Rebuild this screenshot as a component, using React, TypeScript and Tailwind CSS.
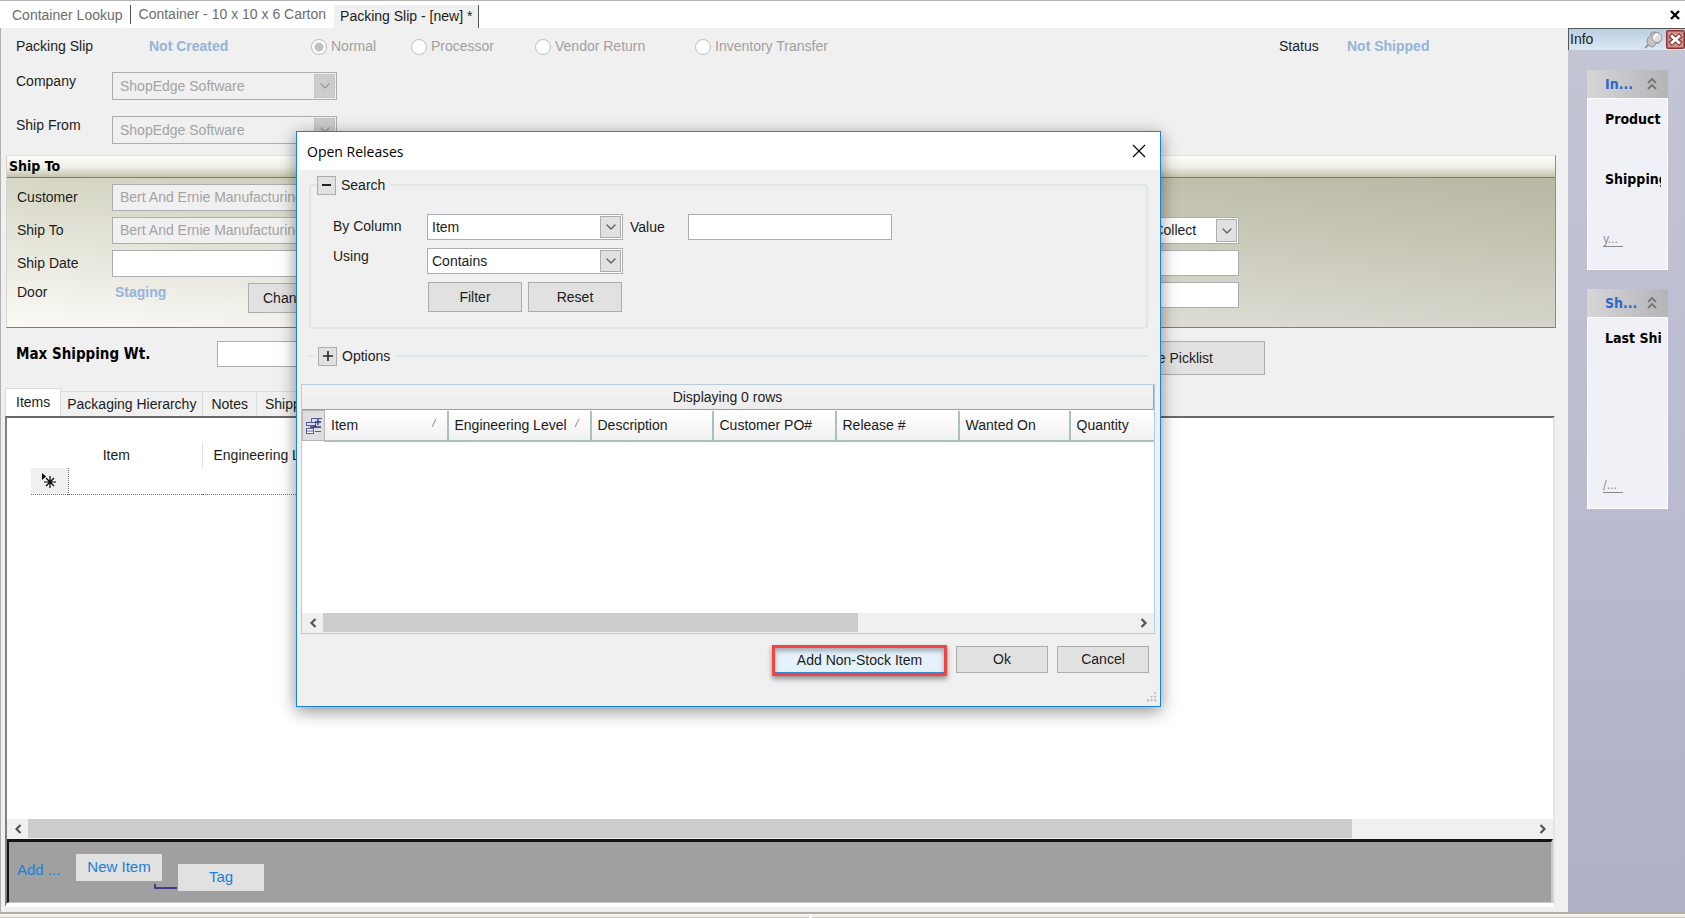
import React from 'react';
import { ChevronDown } from 'lucide-react';
import clsx from 'clsx';

const slipTypes = [
  { label: 'Normal', width: 'w-[100px]' },
  { label: 'Processor', width: 'w-[124px]' },
  { label: 'Vendor Return', width: 'w-[160px]' },
  { label: 'Inventory Transfer', width: 'w-[160px]' },
];

const releaseColumns = [
  { label: 'Item', width: 'w-[123px]', sorted: true },
  { label: 'Engineering Level', width: 'w-[143px]', sorted: true },
  { label: 'Description', width: 'w-[122px]' },
  { label: 'Customer PO#', width: 'w-[123px]' },
  { label: 'Release #', width: 'w-[123px]' },
  { label: 'Wanted On', width: 'w-[111px]' },
  { label: 'Quantity', width: '' },
];

interface SelectBoxProps {
  id: string;
  value: string;
  className?: string;
  disabled?: boolean;
}

const SelectBox: React.FC<SelectBoxProps> = ({ id, value, className, disabled }) => (
  <div className={clsx('relative', className)}>
    <select
      id={id}
      defaultValue={value}
      disabled={disabled}
      className={clsx(
        'block h-full w-full appearance-none border border-[#abadb3] pr-7 outline-none',
        disabled ? 'bg-[#f0f0f0] pl-[7px] text-[#a3a3a3] opacity-100' : 'bg-white pl-1 text-[#1c1c1c]'
      )}
    >
      <option>{value}</option>
    </select>
    <span
      className={clsx(
        'pointer-events-none absolute top-[2px] right-[2px] bottom-[2px] flex w-[21px] items-center justify-center border',
        disabled ? 'border-[#c6c6c6] bg-[#cccccc] text-[#9c9c9c]' : 'border-[#adadad] bg-[#e1e1e1] text-[#606060]'
      )}
    >
      <ChevronDown className="h-4 w-4" strokeWidth={2} />
    </span>
  </div>
);

const ScrollBar: React.FC<{ thumb: string }> = ({ thumb }) => (
  <div className="flex h-5 shrink-0 bg-[#f0f0f0]">
    <button aria-label="Scroll left" className="flex w-[21px] items-center justify-center">
      <svg viewBox="0 0 10 10" className="h-[10px] w-[10px]">
        <path d="M7.5 1 L3.5 5 L7.5 9" fill="none" stroke="#555" strokeWidth="2.2" />
      </svg>
    </button>
    <div className="flex-1">
      <div className={clsx('h-[19px] bg-[#cdcdcd]', thumb)} />
    </div>
    <button aria-label="Scroll right" className="flex w-[21px] items-center justify-center">
      <svg viewBox="0 0 10 10" className="h-[10px] w-[10px]">
        <path d="M2.5 1 L6.5 5 L2.5 9" fill="none" stroke="#555" strokeWidth="2.2" />
      </svg>
    </button>
  </div>
);

const TopTabs: React.FC = () => (
  <nav className="flex h-7 shrink-0 items-stretch border-t border-[#b4b4b4] bg-white pl-3 text-[14px] text-[#6d6d6d]">
    <button className="my-1 border-r border-[#555] pr-[7px]">Container Lookup</button>
    <button className="px-2">Container - 10 x 10 x 6 Carton</button>
    <button className="mt-1 border-r border-[#555] bg-[#f0f0f0] px-[6px] text-[#1c1c1c]">Packing Slip - [new] *</button>
    <button aria-label="Close tab" className="ml-auto flex w-5 items-center justify-center">
      <svg viewBox="0 0 12 10" className="h-[10px] w-3">
        <path d="M2 1 L10 9 M10 1 L2 9" stroke="#000" strokeWidth="2.4" />
      </svg>
    </button>
  </nav>
);

const SlipHeader: React.FC = () => (
  <section className="pl-[15px] text-[14px] text-[#1c1c1c]">
    <div className="flex h-[37px] items-center">
      <span className="w-[133px]">Packing Slip</span>
      <span className="w-[162px] font-bold text-[#94b4d9]">Not Created</span>
      {slipTypes.map((type, i) => (
        <label key={type.label} className={clsx('flex items-center gap-1 whitespace-nowrap text-[#a0a0a0]', type.width)}>
          <input
            type="radio"
            name="slip-type"
            disabled
            defaultChecked={i === 0}
            className="h-4 w-4 shrink-0 appearance-none rounded-full border border-[#c0c0c0] bg-white checked:border-[#b8b8b8] checked:bg-[radial-gradient(circle,#c0c0c0_4px,#fff_5px)]"
          />
          {type.label}
        </label>
      ))}
      <span className="ml-auto w-[68px]">Status</span>
      <span className="w-[221px] font-bold text-[#94b4d9]">Not Shipped</span>
    </div>
    <div className="mt-[7px] flex items-start">
      <label htmlFor="company" className="w-24 leading-[18px]">Company</label>
      <SelectBox id="company" value="ShopEdge Software" disabled className="h-7 w-[225px]" />
    </div>
    <div className="mt-4 flex items-start">
      <label htmlFor="ship-from" className="w-24 leading-[18px]">Ship From</label>
      <SelectBox id="ship-from" value="ShopEdge Software" disabled className="h-7 w-[225px]" />
    </div>
  </section>
);

const ShipTo: React.FC = () => (
  <section className="mt-[11px] mr-3 ml-[5px] border border-t-[#e0e0e0] border-r-[#8c8c8c] border-b-[#7d7d7d] border-l-[#d5d5d5] text-[14px] text-[#1c1c1c]">
    <h2 className="h-[22px] border-b border-[#7d7d78] bg-[linear-gradient(#fcfcfa_0%,#f1f1e8_50%,#c4c4ab_100%)] pl-[2px] font-['DejaVu_Sans_Condensed','DejaVu_Sans',sans-serif] leading-5 font-bold text-black">
      Ship To
    </h2>
    <div className="flex justify-between bg-[linear-gradient(to_right,rgba(40,40,0,0),rgba(40,40,0,0.18)),linear-gradient(to_bottom,#d6d6c5,#fbfaf6)] pt-[6px] pb-[14px] pl-[10px]">
      <div className="flex flex-col gap-[6px]">
        <div className="flex h-[27px] items-center">
          <label htmlFor="customer" className="w-[95px]">Customer</label>
          <SelectBox id="customer" value="Bert And Ernie Manufacturing" disabled className="h-full w-[300px]" />
        </div>
        <div className="flex h-[27px] items-center">
          <label htmlFor="ship-to" className="w-[95px]">Ship To</label>
          <SelectBox id="ship-to" value="Bert And Ernie Manufacturing" disabled className="h-full w-[300px]" />
        </div>
        <div className="flex h-[27px] items-center">
          <label htmlFor="ship-date" className="w-[95px]">Ship Date</label>
          <input id="ship-date" className="h-full w-[300px] border border-[#abadb3] bg-white px-1" />
        </div>
        <div className="flex h-[30px] items-start leading-[18px]">
          <span className="w-[98px]">Door</span>
          <span className="w-[133px] font-bold text-[#94b4d9]">Staging</span>
          <button className="h-[30px] border border-[#adadad] bg-[#e1e1e1] px-[14px]">Change Door</button>
        </div>
      </div>
      <div className="mt-[33px] mr-[316px] flex w-[138px] flex-col gap-[6px]">
        <SelectBox id="freight" value="Freight Collect" className="h-[27px]" />
        <input aria-label="Account" className="h-[26px] border border-[#abadb3] bg-white px-1" />
        <input aria-label="Tracking" className="h-[26px] border border-[#abadb3] bg-white px-1" />
      </div>
    </div>
  </section>
);

const ItemsPanel: React.FC = () => (
  <section className="mr-[13px] ml-1 flex flex-1 flex-col text-[14px] text-[#1c1c1c]">
    <div role="tablist" className="mt-[13px] flex items-end">
      <button role="tab" className="h-7 border border-b-0 border-[#dcdcdc] bg-white px-[10px]">Items</button>
      <button role="tab" className="h-[25px] border-t border-r border-[#dcdcdc] px-[6px]">Packaging Hierarchy</button>
      <button role="tab" className="h-[25px] border-t border-r border-[#dcdcdc] px-2">Notes</button>
      <button role="tab" className="h-[25px] border-t border-r border-[#dcdcdc] px-2">Shipping</button>
    </div>
    <div className="mb-[5px] flex flex-1 flex-col border-t-2 border-r-2 border-b-4 border-l-2 border-t-[#696969] border-r-[#e3e3e3] border-b-white border-l-[#808080] bg-white">
      <div className="flex-1 pt-6 pl-[24px]">
        <table className="border-collapse">
          <thead>
            <tr className="h-[26px]">
              <th colSpan={2} className="w-[171px] border-r border-[#e2e2e2] font-normal">Item</th>
              <th className="w-[150px] pl-[11px] text-left font-normal">Engineering Level</th>
              <th className="w-[600px]" />
            </tr>
          </thead>
          <tbody>
            <tr className="h-[26px] border-b border-dotted border-[#777]">
              <td className="w-[37px] border-r border-dotted border-[#777] bg-[#f0f0f0]">
                <svg viewBox="0 0 16 16" className="mx-auto h-4 w-4">
                  <path d="M1 0 L1 7 L5 3.5 Z" fill="#000" />
                  <path d="M9 3 V15 M3 9 H15 M5 5 L13 13 M13 5 L5 13" stroke="#000" strokeWidth="1.2" />
                </svg>
              </td>
              <td className="w-[134px]" />
              <td />
              <td />
            </tr>
          </tbody>
        </table>
      </div>
      <ScrollBar thumb="w-[88%]" />
      <div className="flex h-16 items-start border-t-[3px] border-r-2 border-b border-l-2 border-t-[#141414] border-r-[#c8c8c8] border-b-[#c8c8c8] border-l-[#141414] bg-[#a0a0a0] pt-3 pl-2 text-[15px] text-[#1a7fdc]">
        <span className="w-[59px] pt-1 leading-6">Add ...</span>
        <button className="h-[27px] w-[86px] bg-[#e1e1e1]">New Item</button>
        <svg viewBox="0 0 24 38" className="-ml-2 h-[38px] w-6">
          <path d="M1 30 V34 H23" fill="none" stroke="#1c1c8c" strokeWidth="1.5" />
        </svg>
        <button className="mt-[10px] h-[27px] w-[86px] bg-[#e1e1e1]">Tag</button>
      </div>
    </div>
  </section>
);

interface InfoCardProps {
  title: string;
  lines: string[];
  link: string;
  bodyHeight: string;
}

const InfoCard: React.FC<InfoCardProps> = ({ title, lines, link, bodyHeight }) => (
  <section className="w-[81px] font-['DejaVu_Sans_Condensed','DejaVu_Sans',sans-serif] text-[14px]">
    <h3 className="flex h-7 items-center justify-between bg-linear-to-r from-[#d6d6d8] to-[#b5b5b7] pr-[10px] pl-[18px] font-bold text-[#2f66cc]">
      {title}
      <svg viewBox="0 0 12 14" className="h-[14px] w-3">
        <path d="M2 6 L6 2 L10 6 M2 12 L6 8 L10 12" fill="none" stroke="#777" strokeWidth="2" />
      </svg>
    </h3>
    <div className={clsx('flex flex-col border border-white bg-[#f0f1f6] pt-[10px] pr-[6px] pl-[17px]', bodyHeight)}>
      <div className="flex flex-col gap-10 overflow-hidden font-bold whitespace-nowrap text-black">
        {lines.map((line) => (
          <span key={line} className="leading-5">{line}</span>
        ))}
      </div>
      <a href="#" className="mt-auto -ml-[2px] w-[20px] border-b border-[#888] text-[12px] leading-[14px] text-[#8a8a8a]">
        {link}
      </a>
    </div>
  </section>
);

const InfoPanel: React.FC = () => (
  <aside className="flex w-[117px] shrink-0 flex-col bg-linear-to-b from-[#c4c6d6] to-[#b0b1c9]">
    <div className="flex h-[22px] items-center border-t border-l border-[#555] bg-linear-to-b from-[#b9cee2] to-[#dce8f2] pl-px text-[14px] text-[#222]">
      <h2>Info</h2>
      <button aria-label="Pin" className="ml-auto">
        <svg viewBox="0 0 20 20" className="h-5 w-5">
          <path d="M6 13 L1 18" stroke="#999" strokeWidth="2" />
          <path d="M4 8 C6 7 7 5 7 3 C11 1 16 2 17 7 C18 12 14 14 12 13 C11 16 9 17 8 17 C4 16 2 12 4 8 Z" fill="#c6c6c8" stroke="#8f8f92" />
          <circle cx="13" cy="7.5" r="5" fill="#dededf" stroke="#959598" />
          <path d="M10 9 C10 6 12 4.5 14 4.5" fill="none" stroke="#fff" strokeWidth="2" />
        </svg>
      </button>
      <button aria-label="Close info" className="ml-[2px]">
        <svg viewBox="0 0 19 19" className="h-[19px] w-[19px]">
          <rect x="0.75" y="0.75" width="17.5" height="17.5" rx="1.5" fill="#cf8f8c" stroke="#8e3330" strokeWidth="1.5" />
          <path d="M4 5 L15 14 M15 5 L4 14" stroke="#7d3634" strokeWidth="5" />
          <path d="M5 5.5 L14 13.5 M14 5.5 L5 13.5" stroke="#fff" strokeWidth="3" />
        </svg>
      </button>
    </div>
    <div className="flex flex-col gap-[19px] pt-5 pl-[19px]">
      <InfoCard title="In..." lines={['Product', 'Shipping']} link="y..." bodyHeight="h-[172px] pb-[22px]" />
      <InfoCard title="Sh..." lines={['Last Shi']} link="/..." bodyHeight="h-[192px] pb-[15px]" />
    </div>
  </aside>
);

const dialogButton = 'border border-[#adadad] bg-[#e1e1e1]';

const OpenReleases: React.FC = () => (
  <div
    role="dialog"
    aria-labelledby="dialog-title"
    className="absolute top-[131px] left-[296px] w-[865px] border border-[#1883d7] bg-[#f0f0f0] pb-[3px] text-[14px] text-[#1c1c1c] shadow-[0_4px_16px_rgba(0,0,0,0.45)]"
  >
    <div className="flex h-[38px] items-center justify-between bg-white pr-[13px] pl-[10px]">
      <h2 id="dialog-title" className="font-['Open_Sans',sans-serif] text-[14px] text-black">Open Releases</h2>
      <button aria-label="Close" className="p-px">
        <svg viewBox="0 0 14 14" className="h-[14px] w-[14px]">
          <path d="M1 1 L13 13 M13 1 L1 13" stroke="#000" strokeWidth="1.2" />
        </svg>
      </button>
    </div>

    <fieldset className="mt-[5px] mr-3 ml-3 h-[154px] rounded-[4px] border-2 border-[#dde6ea] pl-[22px]">
      <legend className="-ml-4 flex items-center gap-[5px] pr-[6px] leading-5">
        <button aria-label="Collapse search" className={clsx('flex h-[19px] w-[19px] items-center justify-center', dialogButton)}>
          <span className="h-[2px] w-[9px] bg-[#222]" />
        </button>
        Search
      </legend>
      <div className="flex items-start pt-[19px]">
        <label htmlFor="by-column" className="w-[94px] leading-6">By Column</label>
        <SelectBox id="by-column" value="Item" className="h-[26px] w-[196px]" />
        <label htmlFor="value" className="ml-[7px] w-[58px] leading-[26px]">Value</label>
        <input id="value" className="h-[26px] w-[204px] border border-[#abadb3] bg-white px-1" />
      </div>
      <div className="flex items-start pt-2">
        <label htmlFor="using" className="w-[94px] leading-4">Using</label>
        <SelectBox id="using" value="Contains" className="h-[26px] w-[196px]" />
      </div>
      <div className="flex gap-[6px] pt-2 pl-[95px]">
        <button className={clsx('h-[30px] w-[94px]', dialogButton)}>Filter</button>
        <button className={clsx('h-[30px] w-[94px]', dialogButton)}>Reset</button>
      </div>
    </fieldset>

    <div className="mt-[17px] mr-3 ml-3 flex items-center leading-5">
      <span className="mr-1 h-[2px] w-[5px] bg-[#dde6ea]" />
      <button aria-label="Expand options" className={clsx('flex h-[19px] w-[19px] items-center justify-center', dialogButton)}>
        <svg viewBox="0 0 10 10" className="h-[10px] w-[10px]">
          <path d="M5 0 V10 M0 5 H10" stroke="#222" strokeWidth="1.6" />
        </svg>
      </button>
      <span className="mx-[5px]">Options</span>
      <span className="h-[2px] flex-1 bg-[#dde6ea]" />
    </div>

    <div className="mt-[18px] mr-[5px] ml-[4px] flex h-[250px] flex-col border border-[#b7cbda] bg-white">
      <div className="flex-1">
        <table className="w-full table-fixed">
          <caption className="h-[25px] border-r border-b border-[#a0a0a0] bg-linear-to-b from-[#f4f4f4] to-[#ececec] leading-6">
            Displaying 0 rows
          </caption>
          <thead>
            <tr className="h-[30px]">
              <th className="w-[22px] border border-[#b4b4b4] bg-[#dedede] p-0">
                <svg viewBox="0 0 18 18" className="mx-auto h-[18px] w-[18px]">
                  <g fill="#fff" stroke="#5a5a9c">
                    <path d="M6.5 5.5 V1.5 H17" fill="none" />
                    <rect x="1.5" y="5.5" width="9" height="3" fill="#dcdcf2" />
                    <rect x="1.5" y="11.5" width="7" height="5" />
                    <path d="M2 14 H8" />
                    <path d="M10 14.5 H16" />
                  </g>
                  <path d="M13 2 V8 M10 5 H16 M5 10 H16 M11 8 L8 11" fill="none" stroke="#30307a" strokeWidth="1.3" />
                </svg>
              </th>
              {releaseColumns.map((column) => (
                <th
                  key={column.label}
                  className={clsx(
                    'border-r-2 border-b-2 border-[#a9c0bf] bg-linear-to-b from-white to-[#f0f0f0] px-[6px] text-left font-normal whitespace-nowrap last:border-r-0',
                    column.width
                  )}
                >
                  <span className="flex items-center justify-between">
                    {column.label}
                    {column.sorted && (
                      <svg viewBox="0 0 8 10" className="mr-[2px] mb-1 h-[10px] w-2">
                        <path d="M1 9 L5 1" stroke="#8a8a8a" />
                      </svg>
                    )}
                  </span>
                </th>
              ))}
            </tr>
          </thead>
        </table>
      </div>
      <ScrollBar thumb="w-[66%]" />
    </div>

    <div className="mt-[11px] mr-[11px] flex items-start justify-end gap-[9px]">
      <button className="h-[31px] w-[175px] border-[3px] border-[#f44343] bg-[#e5f1fb] shadow-[0_3px_5px_rgba(0,0,0,0.4),inset_0_3px_5px_rgba(0,0,0,0.3),inset_0_-1px_0_#3a8fd9]">
        Add Non-Stock Item
      </button>
      <button className={clsx('mt-px h-[27px] w-[92px]', dialogButton)}>Ok</button>
      <button className={clsx('mt-px h-[27px] w-[92px]', dialogButton)}>Cancel</button>
    </div>
    <svg viewBox="0 0 12 12" className="mt-[16px] mr-[2px] ml-auto h-[11px] w-[11px]" fill="#b5b5b5">
      <path d="M8 0h2v2h-2z M4 4h2v2h-2z M8 4h2v2h-2z M0 8h2v2h-2z M4 8h2v2h-2z M8 8h2v2h-2z" />
    </svg>
  </div>
);

const App: React.FC = () => (
  <div className="relative flex min-h-screen flex-col overflow-hidden bg-[#f0f0f0] font-['Liberation_Sans',Arial,sans-serif]">
    <TopTabs />
    <div className="flex flex-1">
      <main className="flex flex-1 flex-col border-l border-[#b0b0b0]">
        <SlipHeader />
        <ShipTo />
        <div className="mt-[13px] flex items-start pl-[15px] text-[14px] text-[#1c1c1c]">
          <label
            htmlFor="max-weight"
            className="w-[201px] font-['DejaVu_Sans_Condensed','DejaVu_Sans',sans-serif] text-[15px] leading-[26px] font-bold text-black"
          >
            Max Shipping Wt.
          </label>
          <input id="max-weight" className="h-[26px] w-[200px] border border-[#abadb3] bg-white px-1" />
          <button className="mr-[303px] ml-auto h-[34px] border border-[#adadad] bg-[#e1e1e1] px-[51px]">Create Picklist</button>
        </div>
        <ItemsPanel />
      </main>
      <InfoPanel />
    </div>
    <footer className="flex h-[6px] shrink-0 gap-[3px] border-t-2 border-[#b0aea8] bg-white">
      <div className="w-[48%] border-b border-[#c9c7bd] bg-[#f4f2ea]" />
      <div className="flex-1 border-b border-[#c9c7bd] bg-[#f4f2ea]" />
    </footer>
    <OpenReleases />
  </div>
);

export default App;
